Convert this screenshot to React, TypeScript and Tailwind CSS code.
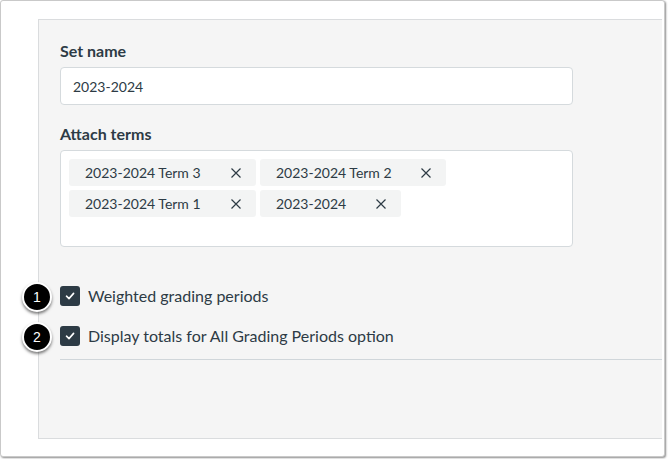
const terms = [
  { label: "2023-2024 Term 3", w: "w-[187px]" },
  { label: "2023-2024 Term 2", w: "w-[186px]" },
  { label: "2023-2024 Term 1", w: "w-[187px]" },
  { label: "2023-2024", w: "w-[141px]" },
];

const options = ["Weighted grading periods", "Display totals for All Grading Periods option"];

function XIcon() {
  return (
    <svg width="12" height="12" viewBox="0 0 12 12" className="shrink-0">
      <path d="M1.5 1.5 L10.5 10.5 M10.5 1.5 L1.5 10.5" stroke="#2d3b45" strokeWidth="1.2" fill="none" />
    </svg>
  );
}

function Check() {
  return (
    <span className="w-5 h-5 rounded-[3px] bg-[#2d3b45] flex items-center justify-center shrink-0">
      <svg width="12" height="12" viewBox="0 0 12 12">
        <path d="M2.5 6.2 L5 8.6 L9.6 3.4" stroke="white" strokeWidth="1.6" fill="none" strokeLinecap="round" strokeLinejoin="round" />
      </svg>
    </span>
  );
}

export default function App() {
  return (
    <div className="w-[668px] h-[459px] bg-white font-['Lato',sans-serif] text-[#2d3b45]">
      <div className="relative w-[665px] h-[457px] bg-white border border-[#c9c9c9] rounded-[3px] shadow-[1px_1px_2px_rgba(0,0,0,0.45)] pl-[37px] pt-[18px]">
        <div className="w-[624px] h-[420px] bg-[#f5f5f5] border-t border-l border-b border-[#dadcde] pl-[21px] pt-[19px]">
          <div className="text-base font-bold leading-6">Set name</div>
          <div className="mt-1 w-[513px] h-[38px] bg-white border border-[#d5dadd] rounded-[4px] flex items-center pl-3 text-[14px]">
            2023-2024
          </div>

          <div className="mt-[17px] text-base font-bold leading-6">Attach terms</div>
          <div className="mt-1 w-[513px] h-[97px] bg-white border border-[#d5dadd] rounded-[4px] pt-2 pl-2">
            <div className="flex flex-wrap gap-1 w-[400px]">
              {terms.map((t) => (
                <div
                  key={t.label}
                  className={`${t.w} h-[27px] bg-[#f3f4f4] rounded-[3px] flex items-center justify-between pl-4 pr-[14px] text-[14px]`}
                >
                  <span>{t.label}</span>
                  <XIcon />
                </div>
              ))}
            </div>
          </div>

          <div className="mt-[39px] flex flex-col gap-5">
            {options.map((o) => (
              <label key={o} className="flex items-center gap-2 h-5 text-base">
                <Check />
                <span>{o}</span>
              </label>
            ))}
          </div>
          <div className="mt-[13px] border-t border-[#d0d6da]" />
        </div>

        {[1, 2].map((n, i) => (
          <div
            key={n}
            className={`absolute left-[21px] ${i === 0 ? "top-[281px]" : "top-[321px]"} w-[30px] h-[30px] rounded-full bg-black border-2 border-white shadow-[0_2px_3px_rgba(0,0,0,0.5)] flex items-center justify-center text-white text-[14px] font-['Liberation_Sans',sans-serif]`}
          >
            {n}
          </div>
        ))}
      </div>
    </div>
  );
}
